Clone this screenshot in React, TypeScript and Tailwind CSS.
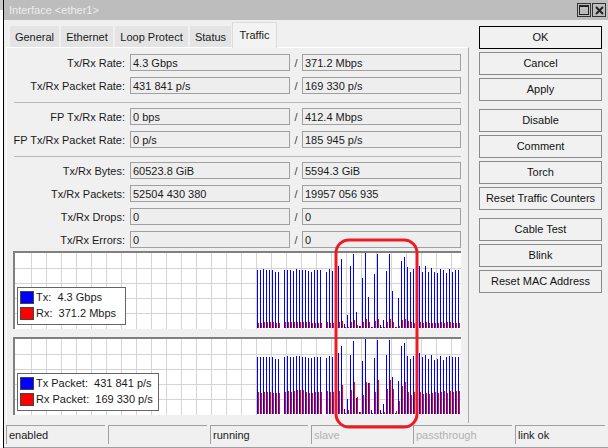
const BLUE1 = [105,104,103,105,105,105,111,111,0,105,105,105,108,102,105,105,105,107,110,105,105,105,0,111,102,107,105,93,72,267,240,93,57,232,273,128,54,185,275,117,57,270,255,108,57,168,275,189,78,66,97,111,102,105,93,111,93,111,99,111,114,102,105,114,102,111,105,105];
const RED1 = [263,263,261,261,261,261,264,264,0,261,261,261,261,261,261,261,261,261,263,264,264,264,0,261,263,263,261,261,258,276,276,261,255,269,273,261,252,261,275,258,252,275,276,261,252,261,275,272,255,252,258,261,263,261,261,263,261,264,263,264,263,261,263,261,260,263,263,263];
const BLUE2 = [65,65,65,67,66,67,72,72,0,67,64,66,66,64,64,66,67,69,70,66,66,66,0,70,64,67,66,54,33,222,192,60,18,189,232,78,12,144,225,69,15,226,207,60,15,126,234,138,33,24,63,72,63,60,54,66,60,72,60,75,72,63,75,66,63,66,66,66];
const RED2 = [171,174,171,171,171,174,174,174,0,171,168,171,168,165,165,165,171,174,174,171,171,171,0,168,171,171,170,168,150,234,225,165,141,186,231,180,141,144,234,171,135,234,231,162,135,162,228,198,153,141,171,180,171,168,171,177,174,177,174,171,174,171,168,174,168,171,168,168];

function Bars({ blue, red, bottom, origin }: { blue: number[]; red: number[]; bottom: number; origin: number }) {
  return (
    <>
      {blue.map((top, i) => {
        if (!top) return null;
        const x = 257 + i * 3 - 15;
        const yBlue = origin + top / 3;
        const yRed = origin + red[i] / 3;
        return (
          <g key={i}>
            <rect x={x} y={yBlue} width="1" height={bottom - yBlue} fill="#0000ff" />
            <rect x={x + 1} y={yRed} width="1" height={bottom - yRed} fill="#ff0000" />
          </g>
        );
      })}
    </>
  );
}

function Graph({ children }: { children: React.ReactNode }) {
  const cols = Array.from({ length: 30 }, (_, i) => 16 + i * 15);
  const rows = [15, 30, 45, 60];
  return (
    <svg width="446" height="76" className="block" shapeRendering="crispEdges">
      <rect width="446" height="76" fill="#ffffff" />
      {cols.map((x) => (
        <rect key={x} x={x} y="0" width="1" height="76" fill="#d4d4d4" />
      ))}
      {rows.map((y) => (
        <rect key={y} x="0" y={y} width="446" height="1" fill="#d4d4d4" />
      ))}
      {children}
    </svg>
  );
}

function Field({ label, tx, rx }: { label: string; tx: string; rx?: string }) {
  return (
    <div className="flex items-center h-[17px] mb-[6px]">
      <div className="w-[118px] shrink-0 pt-[1px] text-right text-[#1a1a1a] whitespace-nowrap">{label}</div>
      <div className="ml-[5px] w-[160px] h-[17px] border border-[#a0a0a0] bg-[#eeeeee] px-[2px] leading-[16px] text-[#1a1a1a] shrink-0">{tx}</div>
      <div className="w-[12px] pt-[1px] text-center text-[#444]">/</div>
      <div className="w-[159px] h-[17px] border border-[#a0a0a0] bg-[#eeeeee] px-[2px] leading-[16px] text-[#1a1a1a] shrink-0">{rx}</div>
    </div>
  );
}

function Btn({ label, primary }: { label: string; primary?: boolean }) {
  return (
    <button
      className={
        "w-[123px] h-[23px] text-[#111] bg-[#f1f1f1] border whitespace-nowrap " +
        (primary ? "border-black" : "border-[#8a8a8a]")
      }
    >
      {label}
    </button>
  );
}

function Tab({ label, width }: { label: string; width: string }) {
  return <div className={"h-[21px] bg-[#e4e4e4] text-center leading-[22px] text-[#1a1a1a] whitespace-nowrap " + width}>{label}</div>;
}

function Swatch({ color }: { color: string }) {
  return <span className={"w-[14px] h-[13px] border border-[#444] shrink-0 " + color} />;
}

function Cell({ label, width, muted }: { label?: string; width: string; muted?: boolean }) {
  return (
    <div
      className={
        "h-[19px] border-l border-t border-l-[#a0a0a0] border-t-[#a0a0a0] pl-[2px] leading-[18px] " +
        width +
        (muted ? " text-[#b0b0b0]" : " text-[#1a1a1a]")
      }
    >
      {label}
    </div>
  );
}

export default function App() {
  return (
    <div
      className="relative flex w-[608px] h-[448px] overflow-hidden bg-white text-[11px]"
      style={{ fontFamily: '"Liberation Sans", Arial, sans-serif' }}
    >
      {/* sliver of the window behind */}
      <div className="w-[3px] shrink-0">
        <div className="h-[10px] bg-[#c8c8c8]" />
      </div>

      <div className="w-[605px] h-[448px] border-l border-black bg-[#f0f0f0] flex flex-col">
        {/* title */}
        <div className="h-[20px] shrink-0 bg-[#bdbdbd] flex items-center justify-between pl-[5px] pr-[2px]">
          <span className="text-[#ececec] text-[11px]">Interface &lt;ether1&gt;</span>
          <div className="flex gap-[1px]">
            <span className="w-[14px] h-[14px] border border-[#333] flex items-center justify-center">
              <span className="w-[10px] h-[10px] border border-[#222] border-t-2" />
            </span>
            <span className="w-[14px] h-[14px] border border-[#333] flex items-center justify-center">
              <svg width="9" height="9" viewBox="0 0 9 9">
                <path d="M1 1 L8 8 M8 1 L1 8" stroke="#222" strokeWidth="2" />
              </svg>
            </span>
          </div>
        </div>

        <div className="flex flex-1 min-h-0">
          {/* left part */}
          <div className="w-[465px] shrink-0 pl-[2px] pt-[6px]">
            <div className="flex h-[21px] items-end pl-[4px] gap-[2px]">
              <Tab label="General" width="w-[49px]" />
              <Tab label="Ethernet" width="w-[52px]" />
              <Tab label="Loop Protect" width="w-[73px]" />
              <Tab label="Status" width="w-[41px]" />
              <div className="h-[26px] w-[45px] -ml-[1px] -mb-[1px] relative bg-[#f3f3f3] border-x border-t border-[#dcdcdc] text-center leading-[24px] text-[#1a1a1a]">Traffic</div>
            </div>
            <div className="h-[376px] border-t border-l border-white border-r border-r-[#a8a8a8] pt-[6px]">
              <Field label="Tx/Rx Rate:" tx="4.3 Gbps" rx="371.2 Mbps" />
              <Field label="Tx/Rx Packet Rate:" tx="431 841 p/s" rx="169 330 p/s" />
              <div className="h-[1px] bg-[#b8b8b8] ml-[7px] mr-[7px] mb-[5px] mt-[8px]" />
              <Field label="FP Tx/Rx Rate:" tx="0 bps" rx="412.4 Mbps" />
              <Field label="FP Tx/Rx Packet Rate:" tx="0 p/s" rx="185 945 p/s" />
              <div className="h-[1px] bg-[#b8b8b8] ml-[7px] mr-[7px] mb-[5px] mt-[8px]" />
              <Field label="Tx/Rx Bytes:" tx="60523.8 GiB" rx="5594.3 GiB" />
              <Field label="Tx/Rx Packets:" tx="52504 430 380" rx="19957 056 935" />
              <Field label="Tx/Rx Drops:" tx="0" rx="0" />
              <Field label="Tx/Rx Errors:" tx="0" rx="0" />

              <div className="relative ml-[6px] w-[448px] h-[78px] border-t-2 border-l-2 border-[#808080] -mt-[3px]">
                <Graph>
                  <Bars blue={BLUE1} red={RED1} bottom={75} origin={235 - 253} />
                </Graph>
                <div className="absolute left-[2px] top-[34px] w-[109px] h-[38px] bg-white border border-[#666] pl-[2px] pt-[3px] flex flex-col gap-[3px] text-[#1a1a1a]">
                  <div className="flex items-center gap-[2px] h-[13px]"><Swatch color="bg-[#0000ff]" /><span className="whitespace-pre">Tx:  4.3 Gbps</span></div>
                  <div className="flex items-center gap-[2px] h-[13px]"><Swatch color="bg-[#ff0000]" /><span className="whitespace-pre">Rx:  371.2 Mbps</span></div>
                </div>
              </div>
              <div className="relative ml-[6px] w-[448px] h-[78px] border-t-2 border-l-2 border-[#808080] mt-[8px]">
                <Graph>
                  <Bars blue={BLUE2} red={RED2} bottom={75} origin={335 - 339} />
                </Graph>
                <div className="absolute left-[2px] top-[34px] w-[142px] h-[38px] bg-white border border-[#666] pl-[2px] pt-[3px] flex flex-col gap-[3px] text-[#1a1a1a]">
                  <div className="flex items-center gap-[2px] h-[13px]"><Swatch color="bg-[#0000ff]" /><span className="whitespace-pre">Tx Packet:  431 841 p/s</span></div>
                  <div className="flex items-center gap-[2px] h-[13px]"><Swatch color="bg-[#ff0000]" /><span className="whitespace-pre">Rx Packet:  169 330 p/s</span></div>
                </div>
              </div>
            </div>
          </div>

          {/* buttons */}
          <div className="flex flex-col pl-[10px] pt-[6px]">
            <div className="flex flex-col gap-[3px]">
              <Btn label="OK" primary />
              <Btn label="Cancel" />
              <Btn label="Apply" />
            </div>
            <div className="flex flex-col gap-[3px] mt-[8px]">
              <Btn label="Disable" />
              <Btn label="Comment" />
              <Btn label="Torch" />
              <Btn label="Reset Traffic Counters" />
            </div>
            <div className="flex flex-col gap-[3px] mt-[8px]">
              <Btn label="Cable Test" />
              <Btn label="Blink" />
              <Btn label="Reset MAC Address" />
            </div>
          </div>
        </div>

        {/* status bar */}
        <div className="h-[23px] shrink-0 pl-[2px] pr-[2px] flex gap-[3px] border-b border-[#a0a0a0]">
          <Cell label="enabled" width="w-[99px]" />
          <Cell width="w-[99px]" />
          <Cell label="running" width="w-[98px]" />
          <Cell label="slave" width="w-[99px]" muted />
          <Cell label="passthrough" width="w-[99px]" muted />
          <Cell label="link ok" width="w-[90px]" />
        </div>
      </div>

      {/* red highlight drawn over the screenshot */}
      <svg className="absolute left-[333px] top-[238px] pointer-events-none" width="87" height="192">
        <rect x="3" y="2" width="81" height="187" rx="13" fill="none" stroke="#ed1c24" strokeWidth="3" />
      </svg>
    </div>
  );
}
